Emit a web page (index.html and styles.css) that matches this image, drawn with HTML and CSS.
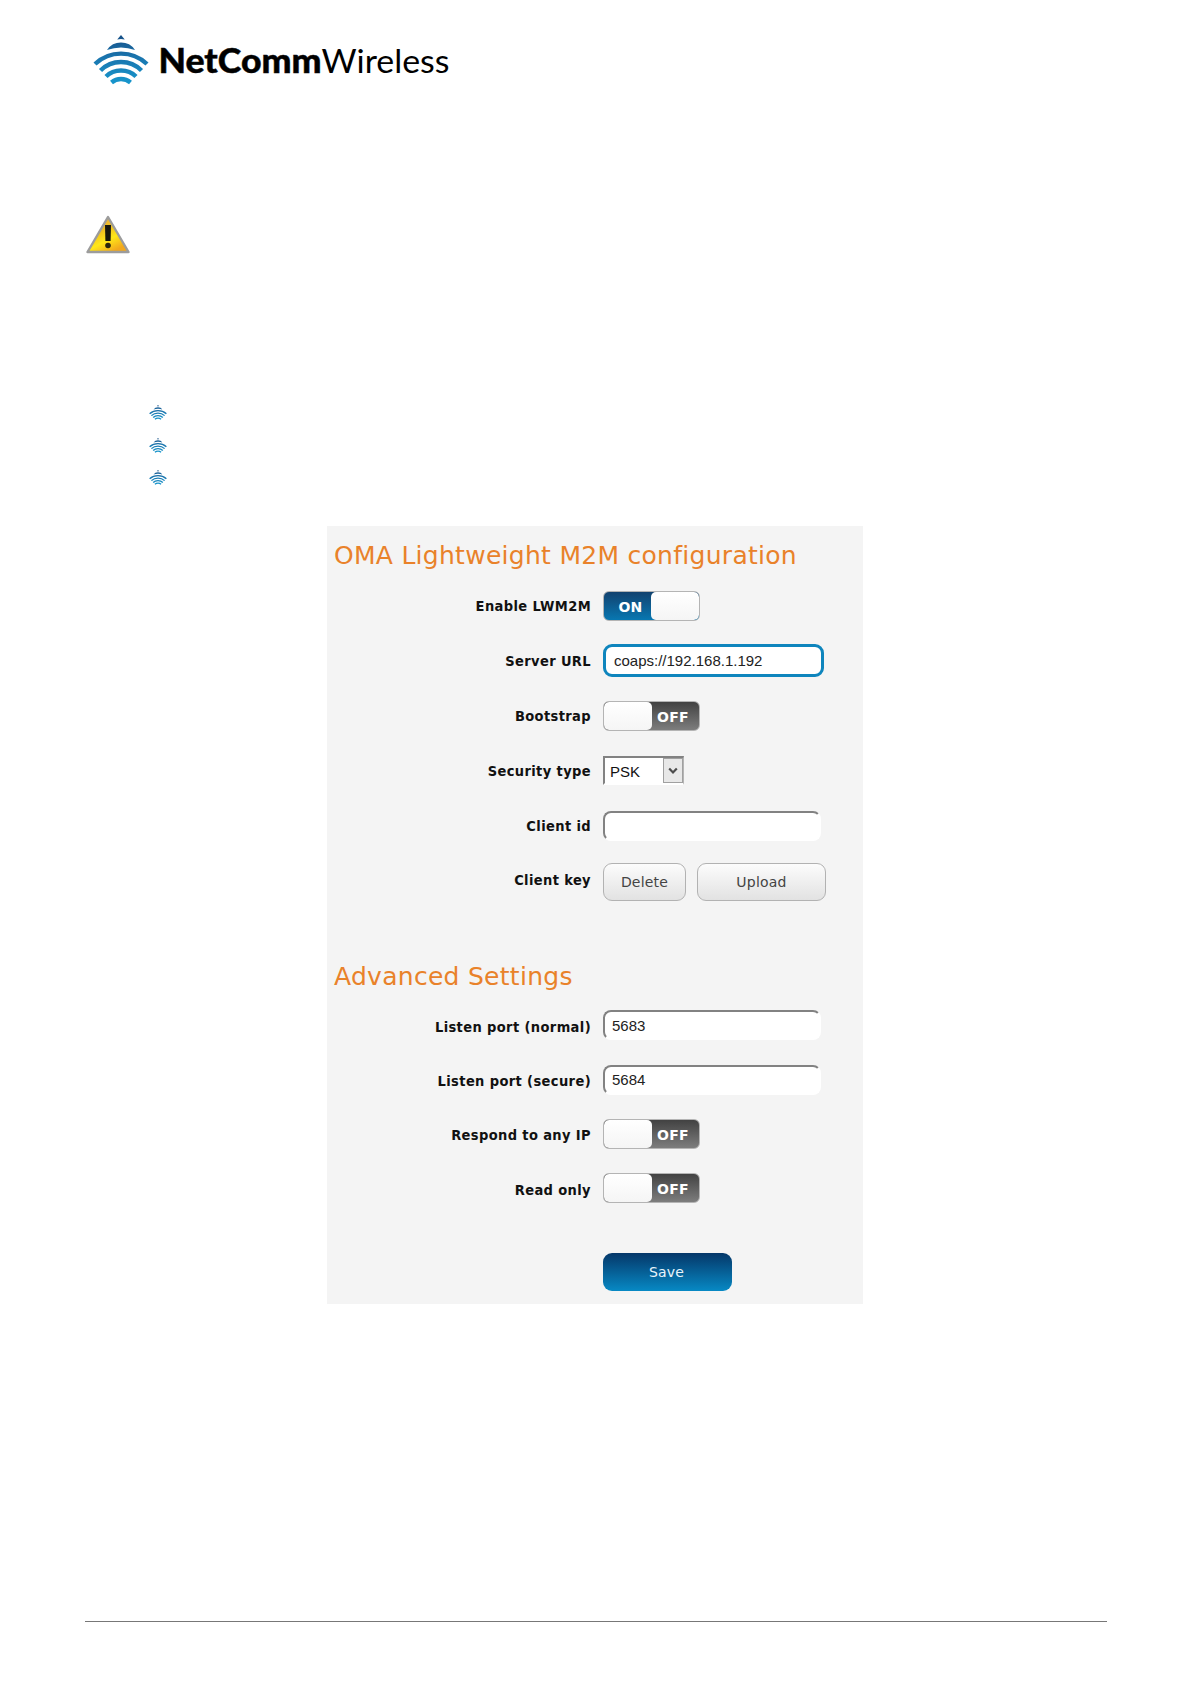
FILE: index.html
```
<!DOCTYPE html>
<html lang="en">
<head>
  <meta charset="UTF-8">
  <meta name="viewport" content="width=device-width, initial-scale=1.0">
  <title>NetCommWireless</title>
  <link rel="stylesheet" href="styles.css">
</head>
<body>

  <svg class="symbols" width="0" height="0">
    <defs>
      <linearGradient id="waves" x1="0" y1="0" x2="0" y2="50" gradientUnits="userSpaceOnUse">
        <stop offset="0" stop-color="#174f86"/>
        <stop offset="0.45" stop-color="#1a75ae"/>
        <stop offset="1" stop-color="#1799cf"/>
      </linearGradient>
      <symbol id="mark" viewBox="0 0 56 50">
        <path d="M28 0 L31.8 4.4 Q28 3.6 24.2 4.4 Z" fill="url(#waves)"/>
        <path d="M14 15 Q19 7.6 28 7.6 Q37 7.6 42 15 Q35 12.5 28 12.5 Q21 12.5 14 15 Z" fill="url(#waves)"/>
        <g fill="none" stroke="url(#waves)" stroke-width="4.4">
          <path d="M2 29 Q13 18.6 28 18.6 Q43 18.6 54 29"/>
          <path d="M7.5 35.5 Q16 27 28 27 Q40 27 48.5 35.5"/>
          <path d="M13 41.5 Q19 35.5 28 35.5 Q37 35.5 43 41.5"/>
          <path d="M18.5 47.5 Q22.5 44 28 44 Q33.5 44 37.5 47.5"/>
        </g>
      </symbol>
    </defs>
  </svg>

  <header>
    <svg class="mark" viewBox="0 0 56 50"><use href="#mark"/></svg>
    <svg class="wordmark" width="300" height="50">
      <text class="bold" x="-0.5" y="38" textLength="163" lengthAdjust="spacingAndGlyphs">NetComm</text>
      <text x="162.5" y="38" textLength="128" lengthAdjust="spacingAndGlyphs">Wireless</text>
    </svg>
  </header>

  <svg class="warning" width="46" height="42" viewBox="0 0 46 42">
    <defs>
      <linearGradient id="amber" x1="0" y1="0" x2="0.6" y2="1">
        <stop offset="0" stop-color="#e8a860"/>
        <stop offset="0.45" stop-color="#f0c020"/>
        <stop offset="0.7" stop-color="#ffe818"/>
        <stop offset="1" stop-color="#f2a81c"/>
      </linearGradient>
    </defs>
    <path d="M23 3 L43.5 38 H2.5 Z" fill="url(#amber)" stroke="#9c9c9c" stroke-width="2.4" stroke-linejoin="round"/>
    <path d="M20 11 H26 L25.6 27 H20.4 Z" fill="#17170c"/>
    <circle cx="23" cy="31.5" r="2.8" fill="#2b270c"/>
  </svg>

  <ul class="bullets">
    <li><svg viewBox="0 0 56 50" preserveAspectRatio="none"><use href="#mark"/></svg></li>
    <li><svg viewBox="0 0 56 50" preserveAspectRatio="none"><use href="#mark"/></svg></li>
    <li><svg viewBox="0 0 56 50" preserveAspectRatio="none"><use href="#mark"/></svg></li>
  </ul>

  <main class="panel">
    <h2>OMA Lightweight M2M configuration</h2>
    <div class="row">
      <label>Enable LWM2M</label>
      <div class="toggle on"><span>ON</span><i></i></div>
    </div>
    <div class="row">
      <label>Server URL</label>
      <input class="focused" type="text" value="coaps://192.168.1.192">
    </div>
    <div class="row">
      <label>Bootstrap</label>
      <div class="toggle"><i></i><span>OFF</span></div>
    </div>
    <div class="row">
      <label>Security type</label>
      <div class="select">
        <span>PSK</span>
        <b><svg width="10" height="8" viewBox="0 0 10 8"><path d="M1.2 1.5 L5 5.5 L8.8 1.5" fill="none" stroke="#4c4c4c" stroke-width="2.2"/></svg></b>
      </div>
    </div>
    <div class="row">
      <label>Client id</label>
      <input type="text">
    </div>
    <div class="row keys">
      <label>Client key</label>
      <button class="small">Delete</button>
      <button>Upload</button>
    </div>

    <h2 class="advanced">Advanced Settings</h2>
    <div class="row short">
      <label>Listen port (normal)</label>
      <input type="text" value="5683">
    </div>
    <div class="row short">
      <label>Listen port (secure)</label>
      <input type="text" value="5684">
    </div>
    <div class="row short">
      <label>Respond to any IP</label>
      <div class="toggle"><i></i><span>OFF</span></div>
    </div>
    <div class="row short">
      <label>Read only</label>
      <div class="toggle"><i></i><span>OFF</span></div>
    </div>
    <button class="save">Save</button>
  </main>

  <footer></footer>

</body>
</html>
```
FILE: styles.css
```
* {
  box-sizing: border-box;
}

body {
  margin: 0;
  height: 1684px;
  display: flex;
  flex-direction: column;
  background: #fff;
  font-family: "DejaVu Sans", Verdana, sans-serif;
  color: #111;
}

.symbols {
  position: absolute;
}

header {
  display: flex;
  height: 50px;
  margin: 35px 0 0 93px;
}

.mark {
  width: 56px;
  height: 50px;
}

.wordmark {
  margin-left: 10px;
  overflow: visible;
  font: 33.5px Lato, sans-serif;
}

.wordmark .bold {
  font-weight: 900;
  stroke: #111;
  stroke-width: 0.5px;
}

.warning {
  margin: 129px 0 0 85px;
  flex: none;
}

.bullets {
  list-style: none;
  margin: 149px 0 0 149px;
  padding: 0;
}

.bullets li {
  height: 32.5px;
}

.bullets svg {
  display: block;
  width: 18px;
  height: 15px;
}

.panel {
  width: 536px;
  height: 778px;
  margin: 23.5px 0 0 327px;
  padding: 12px 8px 0;
  background: #f4f4f4;
  flex: none;
}

h2 {
  margin: 0 0 0 -1px;
  height: 40px;
  line-height: 36px;
  font-size: 25px;
  font-weight: normal;
  letter-spacing: 0.28px;
  color: #e9822a;
  white-space: nowrap;
}

.advanced {
  height: 39px;
  margin-top: 48px;
}

.row {
  display: flex;
  align-items: center;
  height: 55px;
}

.short {
  height: 54.4px;
}

.row label {
  width: 256px;
  margin-right: 12px;
  text-align: right;
  font-family: "DejaVu Sans Condensed", "DejaVu Sans", sans-serif;
  font-stretch: condensed;
  font-size: 14.5px;
  font-weight: bold;
  letter-spacing: 0.38px;
  white-space: nowrap;
}

.short label {
  padding-top: 3px;
}

.keys {
  height: 58px;
}

.keys label {
  padding-bottom: 4px;
}

input {
  width: 218px;
  height: 30px;
  padding: 0 7px;
  border: 2px solid #fff;
  border-top-color: #828282;
  border-left-color: #828282;
  border-radius: 8px;
  background: #fff;
  font: 15px "Liberation Sans", Arial, sans-serif;
  color: #222;
  outline: none;
}

input.focused {
  width: 221px;
  height: 33px;
  margin-bottom: 1px;
  border: 3px solid #0e85bd;
  border-radius: 9px;
  padding: 0 8px;
}

.toggle {
  display: flex;
  width: 97px;
  height: 30px;
  border: 1px solid #b4b4b4;
  border-radius: 6px;
  overflow: hidden;
  background: linear-gradient(#424242, #7d7d7d);
}

.toggle.on {
  background: linear-gradient(#12426f, #0877b1);
}

.toggle i {
  width: 48px;
  border-radius: 5px;
  background: linear-gradient(#fff, #f5f5f5);
}

.toggle span {
  flex: 1;
  padding-right: 5px;
  text-align: center;
  line-height: 30px;
  font-size: 14px;
  font-weight: bold;
  letter-spacing: 0.3px;
  color: #fff;
}

.toggle.on span {
  padding: 0 0 0 6px;
}

.select {
  display: flex;
  width: 81px;
  height: 29px;
  border: 2px solid #fff;
  border-top-color: #828282;
  border-left-color: #828282;
  border-right: 1px solid #b5b5b5;
  background: #fff;
}

.select span {
  flex: 1;
  padding-left: 5px;
  font: 15px/27px "Liberation Sans", Arial, sans-serif;
}

.select b {
  display: flex;
  align-items: center;
  justify-content: center;
  width: 20px;
  border: 1px solid #a0a0a0;
  background: #e8e8e8;
}

button {
  width: 129px;
  height: 38px;
  padding: 0;
  border: 1px solid #b2b2b2;
  border-radius: 9px;
  background: linear-gradient(#fcfcfc, #e2e2e2);
  font: 14px "DejaVu Sans", Verdana, sans-serif;
  letter-spacing: 0.2px;
  color: #444;
}

button.small {
  width: 83px;
  margin-right: 11px;
}

.save {
  display: block;
  margin: 37px 0 0 268px;
  padding-right: 2px;
  border: none;
  background: linear-gradient(#053769, #0789c4);
  color: #e8f4fb;
}

footer {
  height: 1px;
  margin: 317px 84px 0 85px;
  background: #777;
}
```
